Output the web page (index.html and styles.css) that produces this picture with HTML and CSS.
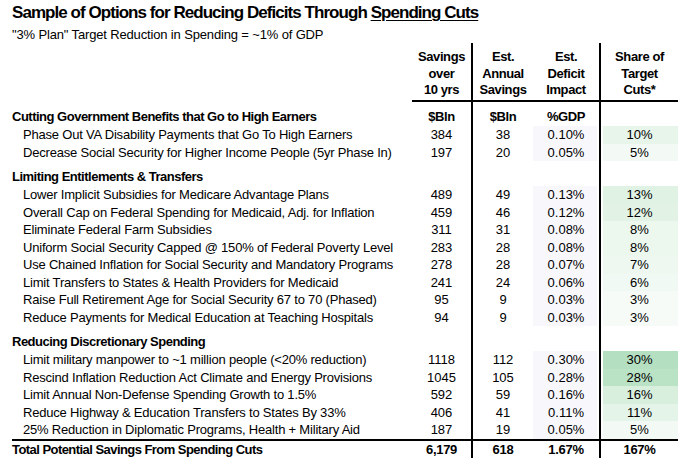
FILE: index.html
```html
<!DOCTYPE html>
<html>
<head>
<meta charset="utf-8">
<link rel="stylesheet" href="styles.css">
</head>
<body>
<div class="page">
  <h1 class="title">Sample of Options for Reducing Deficits Through <u>Spending Cuts</u></h1>
  <p class="subtitle">"3% Plan" Target Reduction in Spending = ~1% of GDP</p>
  <table class="grid">
    <colgroup>
      <col class="c-label"><col class="c-sav"><col class="c-ann"><col class="c-def"><col class="c-share">
    </colgroup>
    <thead>
      <tr class="head">
        <th class="lbl"></th>
        <th class="num">Savings<br>over<br>10 yrs</th>
        <th class="num vl">Est.<br>Annual<br>Savings</th>
        <th class="num">Est.<br>Deficit<br>Impact</th>
        <th class="num vl">Share of<br>Target<br>Cuts*</th>
      </tr>
    </thead>
    <tbody>
      <tr class="cat first">
        <td class="lbl">Cutting Government Benefits that Go to High Earners</td>
        <td class="num b">$Bln</td><td class="num vl b">$Bln</td><td class="num b">%GDP</td><td class="num vl"></td>
      </tr>
      <tr class="row"><td class="lbl item">Phase Out VA Disability Payments that Go To High Earners</td><td class="num">384</td><td class="num vl">38</td><td class="num def">0.10%</td><td class="num vl sh" style="background:#e7f5ea">10%</td></tr>
      <tr class="row"><td class="lbl item">Decrease Social Security for Higher Income People (5yr Phase In)</td><td class="num">197</td><td class="num vl">20</td><td class="num def">0.05%</td><td class="num vl sh" style="background:#f3faf5">5%</td></tr>

      <tr class="blank"><td></td><td></td><td class="vl"></td><td></td><td class="vl"></td></tr>
      <tr class="cat"><td class="lbl">Limiting Entitlements &amp; Transfers</td><td></td><td class="vl"></td><td></td><td class="vl"></td></tr>
      <tr class="row"><td class="lbl item">Lower Implicit Subsidies for Medicare Advantage Plans</td><td class="num">489</td><td class="num vl">49</td><td class="num def">0.13%</td><td class="num vl sh" style="background:#dff2e4">13%</td></tr>
      <tr class="row"><td class="lbl item">Overall Cap on Federal Spending for Medicaid, Adj. for Inflation</td><td class="num">459</td><td class="num vl">46</td><td class="num def">0.12%</td><td class="num vl sh" style="background:#e2f3e6">12%</td></tr>
      <tr class="row"><td class="lbl item">Eliminate Federal Farm Subsidies</td><td class="num">311</td><td class="num vl">31</td><td class="num def">0.08%</td><td class="num vl sh" style="background:#ecf7ee">8%</td></tr>
      <tr class="row"><td class="lbl item">Uniform Social Security Capped @ 150% of Federal Poverty Level</td><td class="num">283</td><td class="num vl">28</td><td class="num def">0.08%</td><td class="num vl sh" style="background:#ecf7ee">8%</td></tr>
      <tr class="row"><td class="lbl item">Use Chained Inflation for Social Security and Mandatory Programs</td><td class="num">278</td><td class="num vl">28</td><td class="num def">0.07%</td><td class="num vl sh" style="background:#eef8f1">7%</td></tr>
      <tr class="row"><td class="lbl item">Limit Transfers to States &amp; Health Providers for Medicaid</td><td class="num">241</td><td class="num vl">24</td><td class="num def">0.06%</td><td class="num vl sh" style="background:#f0f9f3">6%</td></tr>
      <tr class="row"><td class="lbl item">Raise Full Retirement Age for Social Security 67 to 70 (Phased)</td><td class="num">95</td><td class="num vl">9</td><td class="num def">0.03%</td><td class="num vl sh" style="background:#f6fbf8">3%</td></tr>
      <tr class="row"><td class="lbl item">Reduce Payments for Medical Education at Teaching Hospitals</td><td class="num">94</td><td class="num vl">9</td><td class="num def">0.03%</td><td class="num vl sh" style="background:#f6fbf8">3%</td></tr>

      <tr class="blank"><td></td><td></td><td class="vl"></td><td></td><td class="vl"></td></tr>
      <tr class="cat"><td class="lbl">Reducing Discretionary Spending</td><td></td><td class="vl"></td><td></td><td class="vl"></td></tr>
      <tr class="row"><td class="lbl item">Limit military manpower to ~1 million people (&lt;20% reduction)</td><td class="num">1118</td><td class="num vl">112</td><td class="num def">0.30%</td><td class="num vl sh" style="background:#b4dfc0">30%</td></tr>
      <tr class="row"><td class="lbl item">Rescind Inflation Reduction Act Climate and Energy Provisions</td><td class="num">1045</td><td class="num vl">105</td><td class="num def">0.28%</td><td class="num vl sh" style="background:#bae2c5">28%</td></tr>
      <tr class="row"><td class="lbl item">Limit Annual Non-Defense Spending Growth to 1.5%</td><td class="num">592</td><td class="num vl">59</td><td class="num def">0.16%</td><td class="num vl sh" style="background:#d8efde">16%</td></tr>
      <tr class="row"><td class="lbl item">Reduce Highway &amp; Education Transfers to States By 33%</td><td class="num">406</td><td class="num vl">41</td><td class="num def">0.11%</td><td class="num vl sh" style="background:#e4f4e8">11%</td></tr>
      <tr class="row"><td class="lbl item">25% Reduction in Diplomatic Programs, Health + Military Aid</td><td class="num">187</td><td class="num vl">19</td><td class="num def">0.05%</td><td class="num vl sh" style="background:#f3faf5">5%</td></tr>
    </tbody>
    <tfoot>
      <tr class="total">
        <td class="lbl">Total Potential Savings From Spending Cuts</td>
        <td class="num">6,179</td><td class="num vl">618</td><td class="num">1.67%</td><td class="num vl">167%</td>
      </tr>
    </tfoot>
  </table>
</div>
</body>
</html>
```
FILE: styles.css
```css
html, body {
  margin: 0;
  padding: 0;
  background: #ffffff;
}
body {
  font-family: "Liberation Sans", Arial, sans-serif;
  color: #000;
}
.page {
  width: 666px;
  padding: 0 12px;
}
.title {
  margin: 0;
  padding-top: 3px;
  font-size: 17px;
  line-height: 20px;
  height: 20px;
  font-weight: bold;
  letter-spacing: -0.95px;
  white-space: nowrap;
}
.title u {
  text-decoration-thickness: 1px;
  text-underline-offset: 2px;
}
.subtitle {
  margin: 0;
  padding-top: 3px;
  font-size: 13px;
  line-height: 17px;
  height: 17px;
  letter-spacing: -0.15px;
}
.grid {
  width: 666px;
  table-layout: fixed;
  border-collapse: separate;
  border-spacing: 0;
  font-size: 13px;
}
.c-label { width: 400px; }
.c-sav { width: 59px; }
.c-ann { width: 62px; }
.c-def { width: 66px; }
.c-share { width: 79px; }
.grid th, .grid td {
  padding: 0;
  white-space: nowrap;
  overflow: visible;
}
.lbl { text-align: left; }
.num { text-align: center; }
.vl { border-left: 2px solid #000; }
.head th {
  font-weight: bold;
  line-height: 16.5px;
  padding: 6px 0 1.5px;
  vertical-align: top;
  letter-spacing: -0.4px;
}
.head th.num { border-bottom: 2px solid #000; }
.b { font-weight: bold; letter-spacing: -0.4px; }
.cat td {
  height: 18px;
  line-height: 18px;
}
.cat .lbl { font-weight: bold; letter-spacing: -0.5px; }
.cat.first td {
  height: 18px;
  padding-top: 6px;
}
.row td {
  height: 17.5px;
  line-height: 17.5px;
}
.item { padding-left: 11px !important; letter-spacing: -0.2px; }
.def { background: #f8f8fc; box-shadow: inset -2px 0 0 #fff; }
.sh { box-shadow: inset 2px 0 0 #fff; }
.blank td { height: 7px; }
.total td {
  border-top: 2px solid #000;
  font-weight: bold;
  height: 17.5px;
  line-height: 17.5px;
}
.total .lbl { letter-spacing: -0.55px; }
.total .num { letter-spacing: -0.3px; }
```
